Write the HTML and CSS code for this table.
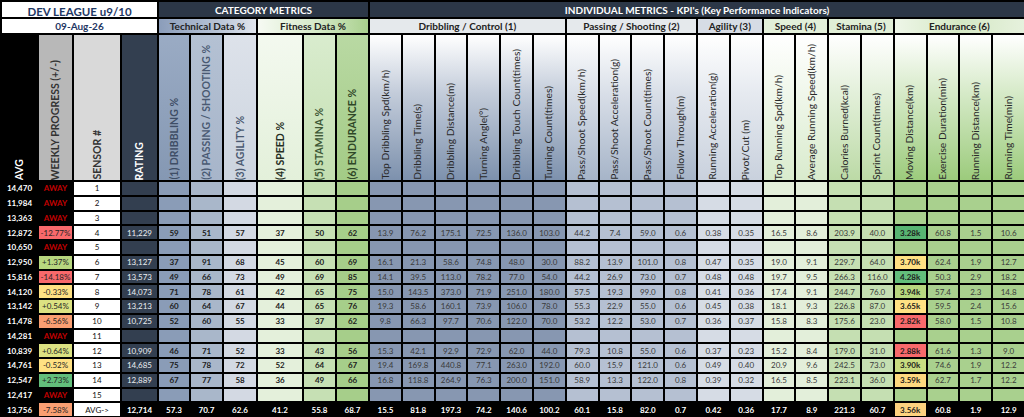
FILE: index.html
```html
<!DOCTYPE html>
<html lang="en">
<head>
<meta charset="utf-8">
<title>DEV LEAGUE u9/10</title>
<link rel="stylesheet" href="styles.css">
</head>
<body>
<table class="sheet">
<colgroup>
<col class="col-avg"><col class="col-wk"><col class="col-sen"><col class="col-rat">
<col class="col-p1"><col class="col-p2"><col class="col-p3"><col class="col-p4"><col class="col-p5"><col class="col-p6">
<col class="col-k1"><col class="col-k1"><col class="col-k1"><col class="col-k1"><col class="col-k1"><col class="col-k1">
<col class="col-k2"><col class="col-k2"><col class="col-k2"><col class="col-k2">
<col class="col-k3"><col class="col-k3">
<col class="col-k4"><col class="col-k4">
<col class="col-k5"><col class="col-k5">
<col class="col-k6"><col class="col-k6"><col class="col-k6"><col class="col-k6">
</colgroup>
<thead>
<tr class="r1">
<th colspan="4" class="title"><span class="title-text">DEV LEAGUE u9/10</span></th>
<th colspan="6" class="band band-l">CATEGORY METRICS</th>
<th colspan="20" class="band band-r">INDIVIDUAL METRICS - KPI's (Key Performance Indicators)</th>
</tr>
<tr class="r2">
<th colspan="4" class="date">09-Aug-26</th>
<th colspan="3" class="sub sub-tech">Technical Data %</th>
<th colspan="3" class="sub sub-fit">Fitness Data %</th>
<th colspan="6" class="sub sub-k1">Dribbling / Control (1)</th>
<th colspan="4" class="sub sub-k2">Passing / Shooting (2)</th>
<th colspan="2" class="sub sub-k3">Agility (3)</th>
<th colspan="2" class="sub sub-k4">Speed (4)</th>
<th colspan="2" class="sub sub-k5">Stamina (5)</th>
<th colspan="4" class="sub sub-k6">Endurance (6)</th>
</tr>
<tr class="r3">
<th class="hv h-avg"><span class="vt">AVG</span></th>
<th class="hv h-wk"><span class="vt">WEEKLY PROGRESS (+/-)</span></th>
<th class="hv h-sen"><span class="vt">SENSOR #</span></th>
<th class="hv h-rat"><span class="vt">RATING</span></th>
<th class="hv h-p1"><span class="vt">(1) DRIBBLING %</span></th>
<th class="hv h-p2"><span class="vt">(2) PASSING / SHOOTING %</span></th>
<th class="hv h-p3"><span class="vt">(3) AGILITY %</span></th>
<th class="hv h-p4"><span class="vt">(4) SPEED %</span></th>
<th class="hv h-p5"><span class="vt">(5) STAMINA %</span></th>
<th class="hv h-p6"><span class="vt">(6) ENDURANCE %</span></th>
<th class="hk h-k1"><span class="vt">Top Dribbling Spd(km/h)</span></th>
<th class="hk h-k1"><span class="vt">Dribbling Time(s)</span></th>
<th class="hk h-k1"><span class="vt">Dribbling Distance(m)</span></th>
<th class="hk h-k1"><span class="vt">Turning Angle(°)</span></th>
<th class="hk h-k1"><span class="vt">Dribbling Touch Count(times)</span></th>
<th class="hk h-k1"><span class="vt">Turning Count(times)</span></th>
<th class="hk h-k2"><span class="vt">Pass/Shoot Speed(km/h)</span></th>
<th class="hk h-k2"><span class="vt">Pass/Shoot Acceleration(g)</span></th>
<th class="hk h-k2"><span class="vt">Pass/Shoot Count(times)</span></th>
<th class="hk h-k2"><span class="vt">Follow Through(m)</span></th>
<th class="hk h-k3"><span class="vt">Running Acceleration(g)</span></th>
<th class="hk h-k3"><span class="vt">Pivot/Cut (m)</span></th>
<th class="hk h-k4"><span class="vt">Top Running Spd(km/h)</span></th>
<th class="hk h-k4"><span class="vt">Average Running Speed(km/h)</span></th>
<th class="hk h-k5"><span class="vt">Calories Burned(kcal)</span></th>
<th class="hk h-k5"><span class="vt">Sprint Count(times)</span></th>
<th class="hk h-k6"><span class="vt">Moving Distance(km)</span></th>
<th class="hk h-k6"><span class="vt">Exercise Duration(min)</span></th>
<th class="hk h-k6"><span class="vt">Running Distance(km)</span></th>
<th class="hk h-k6"><span class="vt">Running Time(min)</span></th>
</tr>
</thead>
<tbody>
<tr><td>14,470</td><td class="away">AWAY</td><td>1</td><td></td><td></td><td></td><td></td><td></td><td></td><td></td><td></td><td></td><td></td><td></td><td></td><td></td><td></td><td></td><td></td><td></td><td></td><td></td><td></td><td></td><td></td><td></td><td></td><td></td><td></td><td></td></tr>
<tr><td>11,984</td><td class="away">AWAY</td><td>2</td><td></td><td></td><td></td><td></td><td></td><td></td><td></td><td></td><td></td><td></td><td></td><td></td><td></td><td></td><td></td><td></td><td></td><td></td><td></td><td></td><td></td><td></td><td></td><td></td><td></td><td></td><td></td></tr>
<tr><td>13,363</td><td class="away">AWAY</td><td>3</td><td></td><td></td><td></td><td></td><td></td><td></td><td></td><td></td><td></td><td></td><td></td><td></td><td></td><td></td><td></td><td></td><td></td><td></td><td></td><td></td><td></td><td></td><td></td><td></td><td></td><td></td><td></td></tr>
<tr><td>12,872</td><td class="hm hm-red">-12.77%</td><td>4</td><td>11,229</td><td>59</td><td>51</td><td>57</td><td>37</td><td>50</td><td>62</td><td>13.9</td><td>76.2</td><td>175.1</td><td>72.5</td><td>136.0</td><td>103.0</td><td>44.2</td><td>7.4</td><td>59.0</td><td>0.6</td><td>0.38</td><td>0.35</td><td>16.5</td><td>8.6</td><td>203.9</td><td>40.0</td><td class="hm hm-green2">3.28k</td><td>60.8</td><td>1.5</td><td>10.6</td></tr>
<tr><td>10,650</td><td class="away">AWAY</td><td>5</td><td></td><td></td><td></td><td></td><td></td><td></td><td></td><td></td><td></td><td></td><td></td><td></td><td></td><td></td><td></td><td></td><td></td><td></td><td></td><td></td><td></td><td></td><td></td><td></td><td></td><td></td><td></td></tr>
<tr><td>12,950</td><td class="hm hm-lgreen">+1.37%</td><td>6</td><td>13,127</td><td>37</td><td>91</td><td>68</td><td>45</td><td>60</td><td>69</td><td>16.1</td><td>21.3</td><td>58.6</td><td>74.8</td><td>48.0</td><td>30.0</td><td>88.2</td><td>13.9</td><td>101.0</td><td>0.8</td><td>0.47</td><td>0.35</td><td>19.0</td><td>9.1</td><td>229.7</td><td>64.0</td><td class="hm hm-yellow">3.70k</td><td>62.4</td><td>1.9</td><td>12.7</td></tr>
<tr><td>15,816</td><td class="hm hm-red">-14.18%</td><td>7</td><td>13,573</td><td>49</td><td>66</td><td>73</td><td>49</td><td>69</td><td>85</td><td>14.1</td><td>39.5</td><td>113.0</td><td>78.2</td><td>77.0</td><td>54.0</td><td>44.2</td><td>26.9</td><td>73.0</td><td>0.7</td><td>0.48</td><td>0.48</td><td>19.7</td><td>9.5</td><td>266.3</td><td>116.0</td><td class="hm hm-green">4.28k</td><td>50.3</td><td>2.9</td><td>18.2</td></tr>
<tr><td>14,120</td><td class="hm hm-yellow">-0.33%</td><td>8</td><td>14,073</td><td>71</td><td>78</td><td>61</td><td>42</td><td>65</td><td>75</td><td>15.0</td><td>143.5</td><td>373.0</td><td>71.9</td><td>251.0</td><td>180.0</td><td>57.5</td><td>19.3</td><td>99.0</td><td>0.8</td><td>0.41</td><td>0.36</td><td>17.4</td><td>9.1</td><td>244.7</td><td>76.0</td><td class="hm hm-lgreen">3.94k</td><td>57.4</td><td>2.3</td><td>14.8</td></tr>
<tr><td>13,142</td><td class="hm hm-ylgn">+0.54%</td><td>9</td><td>13,213</td><td>60</td><td>64</td><td>67</td><td>44</td><td>65</td><td>76</td><td>19.3</td><td>58.6</td><td>160.1</td><td>73.9</td><td>106.0</td><td>78.0</td><td>55.3</td><td>22.9</td><td>55.0</td><td>0.6</td><td>0.45</td><td>0.38</td><td>18.1</td><td>9.3</td><td>226.8</td><td>87.0</td><td class="hm hm-yellow">3.65k</td><td>59.5</td><td>2.4</td><td>15.6</td></tr>
<tr><td>11,478</td><td class="hm hm-orange">-6.56%</td><td>10</td><td>10,725</td><td>52</td><td>60</td><td>55</td><td>33</td><td>37</td><td>62</td><td>9.8</td><td>66.3</td><td>97.7</td><td>70.6</td><td>122.0</td><td>70.0</td><td>53.2</td><td>12.2</td><td>53.0</td><td>0.7</td><td>0.36</td><td>0.37</td><td>15.8</td><td>8.3</td><td>175.6</td><td>23.0</td><td class="hm hm-red">2.82k</td><td>58.0</td><td>1.5</td><td>10.8</td></tr>
<tr><td>14,281</td><td class="away">AWAY</td><td>11</td><td></td><td></td><td></td><td></td><td></td><td></td><td></td><td></td><td></td><td></td><td></td><td></td><td></td><td></td><td></td><td></td><td></td><td></td><td></td><td></td><td></td><td></td><td></td><td></td><td></td><td></td><td></td></tr>
<tr><td>10,839</td><td class="hm hm-ylgn">+0.64%</td><td>12</td><td>10,909</td><td>46</td><td>71</td><td>52</td><td>33</td><td>43</td><td>56</td><td>15.3</td><td>42.1</td><td>92.9</td><td>72.9</td><td>62.0</td><td>44.0</td><td>79.3</td><td>10.8</td><td>55.0</td><td>0.6</td><td>0.37</td><td>0.23</td><td>15.2</td><td>8.4</td><td>179.0</td><td>31.0</td><td class="hm hm-red">2.88k</td><td>61.6</td><td>1.3</td><td>9.0</td></tr>
<tr><td>14,761</td><td class="hm hm-yellow">-0.52%</td><td>13</td><td>14,685</td><td>75</td><td>78</td><td>72</td><td>52</td><td>64</td><td>67</td><td>19.4</td><td>169.8</td><td>440.8</td><td>77.1</td><td>263.0</td><td>192.0</td><td>60.0</td><td>15.9</td><td>121.0</td><td>0.6</td><td>0.49</td><td>0.40</td><td>20.9</td><td>9.6</td><td>242.5</td><td>73.0</td><td class="hm hm-ylgn2">3.90k</td><td>74.6</td><td>1.9</td><td>12.2</td></tr>
<tr><td>12,547</td><td class="hm hm-green">+2.73%</td><td>14</td><td>12,889</td><td>67</td><td>77</td><td>58</td><td>36</td><td>49</td><td>66</td><td>16.8</td><td>118.8</td><td>264.9</td><td>76.3</td><td>200.0</td><td>151.0</td><td>58.9</td><td>13.3</td><td>122.0</td><td>0.8</td><td>0.39</td><td>0.32</td><td>16.5</td><td>8.5</td><td>223.1</td><td>36.0</td><td class="hm hm-yorange">3.59k</td><td>62.7</td><td>1.7</td><td>12.2</td></tr>
<tr><td>12,417</td><td class="away">AWAY</td><td>15</td><td></td><td></td><td></td><td></td><td></td><td></td><td></td><td></td><td></td><td></td><td></td><td></td><td></td><td></td><td></td><td></td><td></td><td></td><td></td><td></td><td></td><td></td><td></td><td></td><td></td><td></td><td></td></tr>
<tr class="avgrow"><td>13,756</td><td class="hm hm-orange">-7.58%</td><td class="avg-label">AVG-&gt;</td><td>12,714</td><td>57.3</td><td>70.7</td><td>62.6</td><td>41.2</td><td>55.8</td><td>68.7</td><td>15.5</td><td>81.8</td><td>197.3</td><td>74.2</td><td>140.6</td><td>100.2</td><td>60.1</td><td>15.8</td><td>82.0</td><td>0.7</td><td>0.42</td><td>0.36</td><td>17.7</td><td>8.9</td><td>221.3</td><td>60.7</td><td class="hm hm-yorange2">3.56k</td><td>60.8</td><td>1.9</td><td>12.9</td></tr>
</tbody>
</table>
</body>
</html>
```

FILE: styles.css
```css
* { box-sizing: border-box; }
html, body { margin: 0; padding: 0; background: #fff; overflow: hidden; }
body { font-family: Lato, "Open Sans", "Liberation Sans", sans-serif; color: #333; }

.sheet {
  border-collapse: collapse;
  table-layout: fixed;
  width: 1024px;
}
.sheet th, .sheet td {
  border: 2px solid #000;
  padding: 0;
  overflow: hidden;
  white-space: nowrap;
  text-align: center;
}

/* columns */
.col-avg { width: 37px; background: #000; }
.col-wk  { width: 35px; background: #000; }
.col-sen { width: 48px; background: #fff; }
.col-rat { width: 37px; background: #333f50; }
.col-p1  { width: 32px; background: #8a9cb7; }
.col-p2  { width: 33px; background: #a9b7ca; }
.col-p3  { width: 34px; background: #d3d9e3; }
.col-p4  { width: 46px; background: #e4f0db; }
.col-p5  { width: 33px; background: #c6e0b4; }
.col-p6  { width: 33px; background: #a6ce8a; }
.col-k1  { width: 32.8px; background: #8797b1; }
.col-k2  { width: 32.8px; background: #b5c0d2; }
.col-k3  { width: 32.8px; background: #d6dce5; }
.col-k4  { width: 32.8px; background: #e3efda; }
.col-k5  { width: 32.8px; background: #c5dfb2; }
.col-k6  { width: 32.8px; background: #a9d08e; }

/* header row 1 */
.r1 { height: 17px; }
.title {
  background: #fff;
  border-bottom-style: hidden;
  font-size: 11.5px;
  font-weight: 700;
  color: #1f3864;
  vertical-align: bottom;
  line-height: 1;
  padding-bottom: 1px;
}
.title-text { text-decoration: underline; text-underline-offset: 1px; }
.band {
  background: #2c3747;
  color: #fff;
  font-size: 10px;
  font-weight: 700;
  line-height: 1;
}
.band-l { border-right-color: #9aa3b0; }
.band-r { border-left-color: #9aa3b0; }

/* header row 2 */
.r2 { height: 16px; }
.date {
  background: #fff;
  font-size: 10px;
  font-weight: 700;
  color: #1f3864;
  line-height: 1;
}
.sub {
  font-size: 10px;
  font-weight: 700;
  color: #222;
  line-height: 1;
}
.sub-tech { background: linear-gradient(to right, #8b9dba, #b7c3d5 60%, #e1e6ee); }
.sub-fit  { background: linear-gradient(to right, #f6faf3, #d4e9c6 55%, #a9d08e); }
.sub-k1   { background: #e5e9ec; }
.sub-k2   { background: #e5e9ec; }
.sub-k3   { background: #d6dce5; }
.sub-k4   { background: #e2efd9; }
.sub-k5   { background: #e0eed6; }
.sub-k6   { background: linear-gradient(to right, #eef6e8, #d4e8c4 50%, #e6f1dd); }

/* header row 3 (rotated) */
.r3 { height: 147px; }
.hv, .hk {
  vertical-align: bottom;
  line-height: 0;
  padding-bottom: 3px;
}
.vt {
  display: inline-block;
  writing-mode: vertical-rl;
  transform: rotate(180deg);
  line-height: 1.15;
  vertical-align: bottom;
  white-space: nowrap;
}
.hv { font-size: 10.5px; font-weight: 700; }
.hk { font-size: 10.3px; font-weight: 400; color: #2a2a2a; }

.h-avg { background: #000; color: #fff; }
.h-wk  { background: #b8b8b8; color: #333; }
.h-sen { background: #d9d9d9; color: #333; }
.h-rat { background: #333f50; color: #fff; }
.h-p1  { background: linear-gradient(to bottom, #9aabc4, #8598b3); color: #3f4e66; }
.h-p2  { background: linear-gradient(to bottom, #b4c1d3, #a7b5ca); color: #4a5a73; }
.h-p3  { background: linear-gradient(to bottom, #dde2ea, #ccd4df); color: #4a5970; }
.h-p4  { background: linear-gradient(to bottom, #f3f9ef, #e3f0da); color: #262f24; }
.h-p5  { background: linear-gradient(to bottom, #d9ecce, #c3deb0); color: #3e5836; }
.h-p6  { background: linear-gradient(to bottom, #b9d9a3, #a3cb86); color: #2f4727; }

.h-k1 { background: linear-gradient(to bottom, #ffffff, #c3ccda 40%, #7d91ad); }
.h-k2 { background: linear-gradient(to bottom, #ffffff, #d9dfe8 40%, #a6b4c8); }
.h-k3 { background: linear-gradient(to bottom, #ffffff, #e6eaf0 40%, #c9d1dd); }
.h-k4 { background: linear-gradient(to bottom, #ffffff, #f0f7eb 40%, #d9ebcd); }
.h-k5 { background: linear-gradient(to bottom, #ffffff, #e3f0da 40%, #bcdaa6); }
.h-k6 { background: linear-gradient(to bottom, #ffffff, #d6eac8 40%, #9ccb7c); }

/* body */
.sheet tbody tr { height: 14.75px; }
.sheet tbody td {
  font-size: 8px;
  line-height: 1;
  color: #3a3a3a;
}
.sheet tbody td:nth-child(1) { color: #fff; font-weight: 700; }
.sheet tbody td:nth-child(3) { color: #111; }
.sheet tbody td:nth-child(4) { color: #eceef2; }
.sheet tbody td:nth-child(n+5):nth-child(-n+10) { color: #1c1c1c; font-weight: 700; }
.sheet tbody td.away { color: #c00000; font-weight: 700; }
.sheet tbody td.hm { color: #262626; }
.sheet tbody td:nth-child(27) { font-weight: 700; color: #1c1c1c; }

.hm-red     { background: #f8696b; }
.hm-orange  { background: #fa9f72; }
.hm-yellow  { background: #ffe183; }
.hm-yorange { background: #fed97f; }
.hm-yorange2{ background: #fdd27f; }
.hm-ylgn    { background: #dce282; }
.hm-ylgn2   { background: #c9dd81; }
.hm-lgreen  { background: #b7d77f; }
.hm-green   { background: #63be7b; }
.hm-green2  { background: #58b472; }

.sheet tbody tr.avgrow { background: #000; }
.sheet tbody tr.avgrow td:nth-child(n) { color: #fff; font-weight: 700; }
.sheet tbody tr.avgrow td.avg-label { background: #fff; color: #111; font-weight: 400; }
.sheet tbody tr.avgrow td.hm { color: #1c1c1c; }
.sheet tbody tr.avgrow td.hm-orange { color: #262626; font-weight: 400; }
```
